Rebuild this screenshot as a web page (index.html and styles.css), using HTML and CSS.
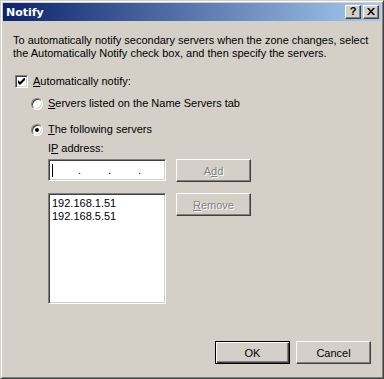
FILE: index.html
```html
<!DOCTYPE html>
<html>
<head>
<meta charset="utf-8">
<link rel="stylesheet" href="styles.css">
</head>
<body>
<div class="window">
  <div class="titlebar">
    <span class="title">Notify</span>
    <div class="tbtns">
      <span class="tbtn help">?</span>
      <span class="tbtn close"><svg width="8" height="7" viewBox="0 0 8 7"><path d="M0 0h2l2 2.5L6 0h2L5 3.5 8 7H6L4 4.5 2 7H0l3-3.5z" fill="#000"/></svg></span>
    </div>
  </div>
  <div class="content">
    <p class="desc">To automatically notify secondary servers when the zone changes, select the Automatically Notify check box, and then specify the servers.</p>
    <div class="row check-row">
      <span class="checkbox"><svg width="7" height="7" viewBox="0 0 7 7"><path d="M0 2v3l2 2 5-5V-1L2 4z" fill="#000"/></svg></span>
      <span class="label"><u>A</u>utomatically notify:</span>
    </div>
    <div class="row radio-row r1">
      <span class="radio"></span>
      <span class="label"><u>S</u>ervers listed on the Name Servers tab</span>
    </div>
    <div class="row radio-row r2">
      <span class="radio on"></span>
      <span class="label"><u>T</u>he following servers</span>
    </div>
    <div class="group">
      <div class="iplabel">I<u>P</u> address:</div>
      <div class="pair">
        <div class="ipbox"><span class="caret"></span><span class="dot d1">.</span><span class="dot d2">.</span><span class="dot d3">.</span></div>
        <span class="btn disabled">A<u>d</u>d</span>
      </div>
      <div class="pair list-pair">
        <div class="listbox">
          <div>192.168.1.51</div>
          <div>192.168.5.51</div>
        </div>
        <span class="btn disabled"><u>R</u>emove</span>
      </div>
    </div>
    <div class="footer">
      <span class="btn default">OK</span>
      <span class="btn">Cancel</span>
    </div>
  </div>
</div>
</body>
</html>
```
FILE: styles.css
```css
* { box-sizing: border-box; }
html, body { margin: 0; padding: 0; background: #d4d0c8; }
body { font-family: "Liberation Sans", Arial, sans-serif; font-size: 11px; color: #000; }
.window {
  width: 384px; height: 379px;
  background: #d4d0c8;
  border-top: 1px solid #d4d0c8; border-left: 1px solid #d4d0c8;
  border-right: 1px solid #404040; border-bottom: 1px solid #404040;
  box-shadow: inset 1px 1px 0 #fff, inset -1px -1px 0 #808080;
  padding: 2px;
  display: flex; flex-direction: column;
}
.titlebar {
  height: 18px; flex: none;
  background: linear-gradient(to right, #0a246a, #a6caf0);
  display: flex; align-items: center; justify-content: space-between;
  padding: 0 2px 0 3px;
}
.title { color: #fff; font-weight: bold; font-size: 11px; font-family: "DejaVu Sans", sans-serif; }
.tbtns { display: flex; gap: 2px; }
.tbtn {
  width: 16px; height: 14px; background: #d4d0c8;
  border-top: 1px solid #fff; border-left: 1px solid #fff;
  border-right: 1px solid #404040; border-bottom: 1px solid #404040;
  box-shadow: inset -1px -1px 0 #808080;
  display: flex; align-items: center; justify-content: center;
  font-weight: bold; font-size: 11px; line-height: 1; color: #000;
  padding-bottom: 1px;
}
.content { flex: 1; display: flex; flex-direction: column; padding: 0 0 0 10px; }
.desc { margin: 13px 0 0 0; line-height: 13px; width: 366px; }
.row { display: flex; align-items: center; height: 13px; }
.label { line-height: 13px; }
.check-row { margin-top: 15px; padding-left: 2px; gap: 5px; }
.checkbox {
  width: 13px; height: 13px; background: #fff;
  border-top: 1px solid #808080; border-left: 1px solid #808080;
  border-right: 1px solid #fff; border-bottom: 1px solid #fff;
  box-shadow: inset 1px 1px 0 #404040, inset -1px -1px 0 #d4d0c8;
  display: flex; align-items: center; justify-content: center;
}
.radio-row { padding-left: 18px; gap: 5px; }
.r1 { margin-top: 9px; }
.r2 { margin-top: 13px; }
.radio {
  width: 12px; height: 12px; border-radius: 50%; background: #fff;
  border: 1px solid; border-color: #808080 #fff #fff #808080;
  box-shadow: inset 1px 1px 0 #404040, inset -1px -1px 0 #d4d0c8;
  position: relative; flex: none;
}
.radio.on::after {
  content: ""; position: absolute; left: 3px; top: 3px; width: 4px; height: 4px; border-radius: 50%; background: #000;
}
.group { padding-left: 35px; margin-top: 6px; }
.iplabel { line-height: 13px; }
.pair { display: flex; gap: 10px; margin-top: 4px; }
.ipbox {
  width: 118px; height: 22px; background: #fff; position: relative;
  border-top: 1px solid #808080; border-left: 1px solid #808080;
  border-right: 1px solid #fff; border-bottom: 1px solid #fff;
  box-shadow: inset 1px 1px 0 #404040, inset -1px -1px 0 #d4d0c8;
}
.caret { position: absolute; left: 3px; top: 4px; width: 1px; height: 13px; background: #000; }
.dot { position: absolute; top: 4px; line-height: 13px; }
.d1 { left: 29px; } .d2 { left: 59px; } .d3 { left: 89px; }
.btn {
  width: 75px; height: 23px; flex: none;
  display: flex; align-items: center; justify-content: center;
  background: #d4d0c8;
  border-top: 1px solid #fff; border-left: 1px solid #fff;
  border-right: 1px solid #404040; border-bottom: 1px solid #404040;
  box-shadow: inset -1px -1px 0 #808080;
}
.btn.disabled { color: #808080; text-shadow: 1px 1px 0 #fff; }
.btn.default { border: 1px solid #000; box-shadow: inset 1px 1px 0 #fff, inset -1px -1px 0 #404040, inset -2px -2px 0 #808080; }
.list-pair { margin-top: 11px; }
.listbox {
  width: 118px; height: 111px; background: #fff;
  border-top: 1px solid #808080; border-left: 1px solid #808080;
  border-right: 1px solid #fff; border-bottom: 1px solid #fff;
  box-shadow: inset 1px 1px 0 #404040, inset -1px -1px 0 #d4d0c8;
  padding: 3px 0 0 3px; line-height: 13px;
}
.footer { display: flex; justify-content: flex-end; gap: 6px; margin-top: auto; margin-bottom: 12px; padding-right: 10px; }
```
